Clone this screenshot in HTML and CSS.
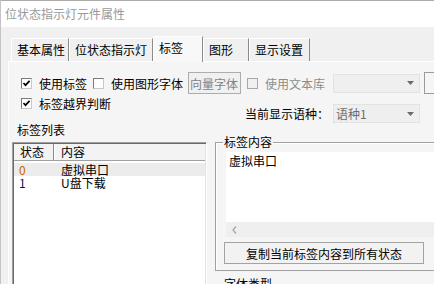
FILE: index.html
```html
<!DOCTYPE html>
<html>
<head>
    <meta charset="UTF-8">
    <title>位状态指示灯元件属性</title>
    <link rel="stylesheet" href="styles.css">
</head>
<body>
    <div class="window">
        <div class="titlebar">位状态指示灯元件属性</div>
        <div class="tabs">
            <div class="tab tab-basic">基本属性</div>
            <div class="tab tab-bit">位状态指示灯</div>
            <div class="tab tab-label active">标签</div>
            <div class="tab tab-shape">图形</div>
            <div class="tab tab-show">显示设置</div>
        </div>
        <div class="pane">
            <div class="opts">
                <div class="row">
                    <label class="check">
                        <span class="box"><svg viewBox="0 0 9 9"><path d="M1.5 4l2 2.2L7.6 1.8"/></svg></span>
                        使用标签
                    </label>
                    <label class="check gap-font">
                        <span class="box"></span>
                        使用图形字体
                    </label>
                    <button class="btn-vector">向量字体</button>
                    <label class="check disabled gap-lib">
                        <span class="box"></span>
                        使用文本库
                    </label>
                    <div class="combo combo-lib"><span></span><svg viewBox="0 0 7 4"><path d="M0 0h7L3.5 4z"/></svg></div>
                    <div class="edge-box"></div>
                </div>
                <div class="row2">
                    <label class="check">
                        <span class="box"><svg viewBox="0 0 9 9"><path d="M1.5 4l2 2.2L7.6 1.8"/></svg></span>
                        标签越界判断
                    </label>
                    <div class="lang">
                        <span class="lang-name">当前显示语种：</span>
                        <div class="combo"><span>语种1</span><svg viewBox="0 0 7 4"><path d="M0 0h7L3.5 4z"/></svg></div>
                    </div>
                </div>
            </div>

            <div class="lower">
                <div class="list-col">
                    <div class="list-title">标签列表</div>
                    <div class="list">
                        <div class="list-head">
                            <div class="h-state">状态</div>
                            <div class="h-content">内容</div>
                        </div>
                        <div class="item sel">
                            <div class="c-state st0">0</div>
                            <div class="c-content">虚拟串口</div>
                        </div>
                        <div class="item">
                            <div class="c-state st1">1</div>
                            <div class="c-content">U盘下载</div>
                        </div>
                    </div>
                </div>
                <div class="right-col">
                    <fieldset class="group">
                        <legend>标签内容</legend>
                        <div class="textbox">虚拟串口</div>
                        <div class="hscroll"><svg viewBox="0 0 5 8"><path d="M4 0.5L1 4l3 3.5"/></svg></div>
                        <button class="copy-btn">复制当前标签内容到所有状态</button>
                    </fieldset>
                    <fieldset class="group font-group">
                        <legend>字体类型</legend>
                        <div class="font-body"></div>
                    </fieldset>
                </div>
            </div>
        </div>
    </div>
</body>
</html>
```

FILE: styles.css
```css
body {
    margin: 0;
    font-family: "Noto Sans CJK SC", "Liberation Sans", sans-serif;
    font-size: 12px;
    color: #000;
    background: #f0f0f0;
}
.window {
    width: 434px;
    height: 284px;
    overflow: hidden;
    box-sizing: border-box;
    border-left: 1px solid #c4c4c4;
    background: #f0f0f0;
}
.titlebar {
    height: 26px;
    line-height: 26px;
    border-top: 1px solid #ababab;
    background: #fff;
    color: #999;
    padding-left: 4px;
}
.tabs {
    display: flex;
    align-items: flex-end;
    height: 23px;
    padding: 11px 0 0 10px;
}
.tab {
    box-sizing: border-box;
    height: 23px;
    line-height: 21px;
    padding-left: 5px;
    border-top: 1px solid #fff;
    border-left: 1px solid #fff;
    border-right: 1px solid #8a8a8a;
    background: #f0f0f0;
    white-space: nowrap;
}
.tab.active {
    height: 26px;
    margin-bottom: -1px;
    background: #f8f8f8;
    position: relative;
    z-index: 1;
}
.tab-basic { width: 58px; }
.tab-bit { width: 84px; }
.tab-label { width: 50px; }
.tab-shape { width: 46px; }
.tab-show { width: 61px; }
.pane {
    margin-left: 7px;
    width: 480px;
    height: 240px;
    border-top: 1px solid #fff;
    border-left: 1px solid #fff;
    background: #f5f5f5;
}
.opts {
    padding: 10px 0 0 12px;
}
.row {
    display: flex;
    align-items: center;
    height: 22px;
    white-space: nowrap;
}
.row > * {
    flex: none;
}
.check {
    display: flex;
    align-items: center;
    gap: 7px;
    white-space: nowrap;
}
.box {
    flex: none;
    box-sizing: border-box;
    width: 11px;
    height: 11px;
    border: 1px solid #7a7a7a;
    border-right-color: #c8c8c8;
    border-bottom-color: #c8c8c8;
    background: #fff;
    display: flex;
    align-items: center;
    justify-content: center;
}
.box svg {
    width: 9px;
    height: 9px;
    fill: none;
    stroke: #000;
    stroke-width: 1.7;
}
.check.disabled {
    color: #8d8d8d;
}
.check.disabled .box {
    background: #f0f0f0;
    border-color: #a8a8a8;
}
.gap-font { margin-left: 6px; }
.gap-lib {
    margin-left: 6px;
    width: 78px;
}
.btn-vector {
    margin-left: 5px;
    width: 53px;
    height: 22px;
    padding: 0 0 0 1px;
    border: 1px solid #adadad;
    background: #f0f0f0;
    color: #838383;
    font: inherit;
    text-align: left;
    overflow: hidden;
    white-space: nowrap;
}
.combo {
    flex: none;
    box-sizing: border-box;
    width: 87px;
    height: 19px;
    border: 1px solid #e2e2e2;
    background: #efefef;
    display: flex;
    align-items: center;
    justify-content: space-between;
    padding: 0 5px 0 2px;
    color: #6d6d6d;
}
.combo svg {
    width: 7px;
    height: 4px;
    fill: #6a6a6a;
}
.combo-lib { margin-left: 8px; }
.edge-box {
    margin-left: 4px;
    width: 20px;
    height: 22px;
    box-sizing: border-box;
    border: 1px solid #9a9a9a;
    background: #f5f5f5;
}
.row2 {
    display: grid;
    grid-template-columns: 224px auto;
    margin-top: 1px;
    align-items: start;
}
.row2 .check {
    height: 16px;
}
.lang {
    display: flex;
    align-items: center;
    margin-top: 9px;
}
.lang-name {
    flex: none;
    width: 88px;
    white-space: nowrap;
}
.lower {
    display: flex;
    align-items: flex-start;
}
.list-col {
    margin-left: 3px;
}
.list-title {
    height: 14px;
    line-height: 14px;
    padding-left: 5px;
}
.list {
    box-sizing: border-box;
    margin-top: 5px;
    width: 195px;
    height: 160px;
    padding: 1px;
    border: 1px solid;
    border-color: #a0a0a0 #fff #fff #a0a0a0;
    box-shadow: inset 1px 1px #696969, inset -1px -1px #e3e3e3;
    background: #fff;
}
.list-head {
    display: flex;
    height: 16px;
    line-height: 16px;
    background: #f3f3f3;
    border-bottom: 1px solid #a0a0a0;
}
.h-state {
    box-sizing: border-box;
    width: 40px;
    padding-left: 6px;
    border-right: 1px solid #8a8a8a;
}
.h-content {
    flex: 1;
    padding-left: 6px;
    border-left: 1px solid #fff;
}
.list-head + .item {
    margin-top: 2px;
}
.item {
    display: flex;
    height: 13px;
    line-height: 13px;
}
.item.sel {
    background: #ececec;
}
.c-state {
    width: 40px;
    padding-left: 5px;
    box-sizing: border-box;
}
.c-content {
    padding-left: 7px;
}
.st0 { color: #c86400; }
.st1 { color: #10105a; }
.right-col {
    margin-left: 8px;
    margin-top: 12px;
}
.group {
    box-sizing: border-box;
    width: 250px;
    min-width: 0;
    margin: 0;
    padding: 3px 0 6px 7px;
    border: 1px solid #a0a0a0;
    border-right: none;
    box-shadow: inset 1px 1px #fff;
}
.group legend {
    padding: 0 1px;
    line-height: 14px;
    font-size: 12px;
}
.textbox {
    margin-left: 3px;
    height: 70px;
    box-sizing: border-box;
    padding: 2px 3px;
    line-height: 14px;
    background: #fff;
}
.hscroll {
    margin-left: 3px;
    height: 15px;
    background: #efefef;
    display: flex;
    align-items: center;
    padding-left: 6px;
}
.hscroll svg {
    width: 5px;
    height: 8px;
    fill: none;
    stroke: #a3a3a3;
    stroke-width: 1.2;
}
.copy-btn {
    display: block;
    margin: 5px 0 0 1px;
    width: 200px;
    height: 22px;
    padding: 0;
    border: 1px solid #a3a3a3;
    background: #f2f2f2;
    font: inherit;
    color: #000;
}
.font-group {
    margin-top: 6px;
}
.font-body {
    height: 30px;
}
```
